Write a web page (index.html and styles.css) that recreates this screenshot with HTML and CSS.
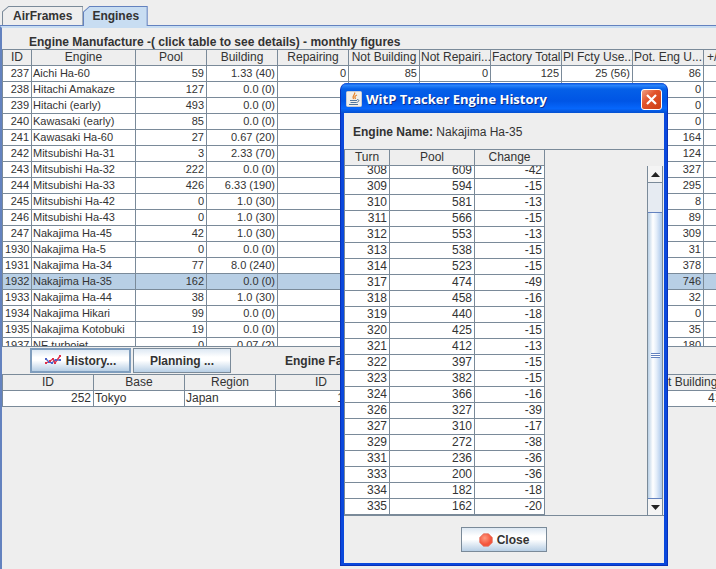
FILE: index.html
```
<!DOCTYPE html>
<html lang="en">

<head>
    <meta charset="utf-8">
    <title>WitP Tracker</title>
    <link rel="stylesheet" href="styles.css">
</head>

<body>
    <nav class="tabs">
        <button type="button" class="tab"><svg class="tab-shape" viewBox="0 0 80 20" preserveAspectRatio="none"><path d="M.5 20V6L6.500.5H79.500V20" /></svg><span>AirFrames</span></button>
        <button type="button" class="tab active"><svg class="tab-shape" viewBox="0 0 64 20" preserveAspectRatio="none"><path d="M.5 20V6L6.500.5H63.500V20" /></svg><span>Engines</span></button>
    </nav>

    <main class="panel">
        <h1 class="caption">Engine Manufacture -( click table to see details) - monthly figures</h1>
        <div class="engines-view">
            <table class="grid engines">
                <colgroup>
                    <col class="col-id">
                    <col class="col-engine">
                    <col span="9" class="col-figure">
                </colgroup>
                <thead>
                    <tr>
                        <th>ID</th>
                        <th>Engine</th>
                        <th>Pool</th>
                        <th>Building</th>
                        <th>Repairing</th>
                        <th>Not Building</th>
                        <th>Not Repairi...</th>
                        <th>Factory Total</th>
                        <th>Pl Fcty Use...</th>
                        <th>Pot. Eng U...</th>
                        <th class="last">+/- Engines</th>
                    </tr>
                </thead>
                <tbody id="engineRows"></tbody>
            </table>
        </div>

        <div class="toolbar">
            <button type="button" class="btn btn-history">
                <svg width="17" height="14" viewBox="0 0 17 14" fill="none">
                    <path d="M1 5L4 8L7 9L10 6L15 6" stroke="#4a63c8" stroke-width="1.300" />
                    <path d="M1 9L5 7L8 5L10 9L15 2" stroke="#e0304a" stroke-width="1.300" />
                    <path d="M0 4h2v2H0zM3 7h2v2H3zM6 8h2v2H6zM10 5h2v2h-2zM14 5h2v2h-2z" fill="#4a63c8" />
                    <path d="M0 8h2v2H0zM4 6h2v2H4zM7 4h2v2H7zM9 8h2v2H9zM14 1h2v2h-2z" fill="#e0304a" />
                </svg>
                History...
            </button>
            <button type="button" class="btn btn-planning">Planning ...</button>
            <h2 class="toolbar-title">Engine Factories</h2>
        </div>

        <div class="factories-view">
            <table class="grid factories">
                <thead>
                    <tr>
                        <th>ID</th>
                        <th>Base</th>
                        <th>Region</th>
                        <th>ID</th>
                        <th>Engine</th>
                        <th>Building</th>
                        <th>Repairing</th>
                        <th>Not Building</th>
                    </tr>
                </thead>
                <tbody>
                    <tr>
                        <td>252</td>
                        <td class="left">Tokyo</td>
                        <td class="left">Japan</td>
                        <td>1932</td>
                        <td></td>
                        <td></td>
                        <td></td>
                        <td>418</td>
                    </tr>
                </tbody>
            </table>
        </div>
    </main>

    <section class="dialog" role="dialog" aria-labelledby="dialogTitle">
        <header class="titlebar">
            <svg width="16" height="16" viewBox="0 0 16 16" fill="none">
                <rect x=".5" y=".5" width="15" height="15" rx="1" fill="#f2f0ea" stroke="#c9cbd2" />
                <path d="M8.500 1.500C10 3.500 5.500 4.500 7.500 8M11 4C8.500 5 8.500 6 9.500 8" stroke="#e8862e" stroke-width="1.300" />
                <path d="M4 9.500h7M4.500 11.500h6M11 8.500c3 0 2 2.500-.5 3M3 13.500h9" stroke="#53779c" />
            </svg>
            <h2 id="dialogTitle">WitP Tracker Engine History</h2>
            <button type="button" class="window-close" aria-label="Close window">
                <svg width="13" height="13" viewBox="0 0 13 13"><path d="M2 2L11 11M11 2L2 11" stroke="#fff" stroke-width="2.200" /></svg>
            </button>
        </header>
        <div class="dialog-body">
            <p class="engine-name"><b>Engine Name:</b> Nakajima Ha-35</p>
            <div class="history-pane">
                <div class="history-main">
                    <table class="grid history">
                        <colgroup>
                            <col class="col-turn">
                            <col class="col-pool">
                            <col class="col-change">
                        </colgroup>
                        <thead>
                            <tr>
                                <th>Turn</th>
                                <th>Pool</th>
                                <th>Change</th>
                            </tr>
                        </thead>
                    </table>
                    <div class="history-view">
                        <table class="grid history">
                            <colgroup>
                                <col class="col-turn">
                                <col class="col-pool">
                                <col class="col-change">
                            </colgroup>
                            <tbody id="historyRows"></tbody>
                        </table>
                    </div>
                </div>
                <div class="scrollbar">
                    <button type="button" class="arrow" aria-label="Scroll up"><svg width="9" height="5" viewBox="0 0 9 5"><path d="M0 5L4.500 0L9 5z" fill="#222" /></svg></button>
                    <div class="track"></div>
                    <div class="thumb"><span class="grip"></span></div>
                    <button type="button" class="arrow" aria-label="Scroll down"><svg width="9" height="5" viewBox="0 0 9 5"><path d="M0 0L4.500 5L9 0z" fill="#222" /></svg></button>
                </div>
            </div>
            <footer class="dialog-footer">
                <button type="button" class="btn btn-close">
                    <svg width="14" height="14" viewBox="0 0 14 14">
                        <defs>
                            <radialGradient id="stop" cx=".4" cy=".35">
                                <stop offset="0" stop-color="#ff9a80" />
                                <stop offset="1" stop-color="#f4553c" />
                            </radialGradient>
                        </defs>
                        <path d="M4.500.7h5L13.300 4.500v5L9.500 13.300h-5L.7 9.500v-5z" fill="url(#stop)" stroke="#e0705f" stroke-width=".7" />
                    </svg>
                    Close
                </button>
            </footer>
        </div>
    </section>

    <script>
        // id, engine, pool, building, potential engines used
        const engines = [
            [237, 'Aichi Ha-60', 59, '1.33 (40)', 86],
            [238, 'Hitachi Amakaze', 127, '0.0 (0)', 0],
            [239, 'Hitachi (early)', 493, '0.0 (0)', 0],
            [240, 'Kawasaki (early)', 85, '0.0 (0)', 0],
            [241, 'Kawasaki Ha-60', 27, '0.67 (20)', 164],
            [242, 'Mitsubishi Ha-31', 3, '2.33 (70)', 124],
            [243, 'Mitsubishi Ha-32', 222, '0.0 (0)', 327],
            [244, 'Mitsubishi Ha-33', 426, '6.33 (190)', 295],
            [245, 'Mitsubishi Ha-42', 0, '1.0 (30)', 8],
            [246, 'Mitsubishi Ha-43', 0, '1.0 (30)', 89],
            [247, 'Nakajima Ha-45', 42, '1.0 (30)', 309],
            [1930, 'Nakajima Ha-5', 0, '0.0 (0)', 31],
            [1931, 'Nakajima Ha-34', 77, '8.0 (240)', 378],
            [1932, 'Nakajima Ha-35', 162, '0.0 (0)', 746],
            [1933, 'Nakajima Ha-44', 38, '1.0 (30)', 32],
            [1934, 'Nakajima Hikari', 99, '0.0 (0)', 0],
            [1935, 'Nakajima Kotobuki', 19, '0.0 (0)', 35],
            [1937, 'NE turbojet', 0, '0.07 (2)', 180]
        ];

        // repairing, not building, not repairing, factory total, planned use
        const factoryFigures = { 237: [0, 85, 0, 125, '25 (56)'] };

        // turn, pool, change
        const history = [
            [308, 609, -42], [309, 594, -15], [310, 581, -13], [311, 566, -15],
            [312, 553, -13], [313, 538, -15], [314, 523, -15], [317, 474, -49],
            [318, 458, -16], [319, 440, -18], [320, 425, -15], [321, 412, -13],
            [322, 397, -15], [323, 382, -15], [324, 366, -16], [326, 327, -39],
            [327, 310, -17], [329, 272, -38], [331, 236, -36], [333, 200, -36],
            [334, 182, -18], [335, 162, -20]
        ];

        const engineRows = document.getElementById('engineRows');
        engines.forEach(([id, name, pool, building, used]) => {
            const row = engineRows.insertRow();
            const figures = factoryFigures[id] || ['', '', '', '', ''];
            if (id === 1932) row.className = 'selected';
            row.innerHTML = `
                <td>${id}</td>
                <td class="left">${name}</td>
                <td>${pool}</td>
                <td>${building}</td>
                ${figures.map(figure => `<td>${figure}</td>`).join('')}
                <td>${used}</td>
                <td></td>
            `;
        });

        const historyRows = document.getElementById('historyRows');
        history.forEach(([turn, pool, change]) => {
            const row = historyRows.insertRow();
            row.innerHTML = `<td>${turn}</td><td>${pool}</td><td>${change}</td>`;
        });
    </script>
</body>

</html>
```
FILE: styles.css
```
* {
    box-sizing: border-box;
}

body {
    margin: 0;
    min-height: 100vh;
    display: flex;
    flex-direction: column;
    overflow: hidden;
    background-color: #eee;
    color: #333;
    font-family: "Liberation Sans", Arial, sans-serif;
    font-size: 12px;
}

h1,
h2,
p {
    margin: 0;
    font-size: 12px;
}

button {
    padding: 0;
    color: #333;
    font: bold 12px "Liberation Sans", Arial, sans-serif;
}

/* Tabs */
.tabs {
    display: flex;
    padding: 6px 2px 0;
    border-bottom: 1px solid #6382bf;
}

.tab {
    position: relative;
    height: 19px;
    padding: 0 11px;
    border: none;
    background: none;
}

.tab span {
    position: relative;
}

.tab-shape {
    position: absolute;
    left: 0;
    top: 0;
    width: 100%;
    height: 100%;
    fill: #eee;
    stroke: #7a8a99;
}

.active {
    height: 20px;
    margin-bottom: -1px;
    padding: 0 9px;
}

.active .tab-shape {
    fill: #c8ddf2;
    stroke: #6382bf;
}

/* Main panel */
.panel {
    flex: 1;
    border-top: 2px solid #c8ddf2;
    border-left: 2px solid #6382bf;
}

.caption {
    padding: 6px 27px 0;
    height: 21px;
    line-height: 16px;
    white-space: nowrap;
}

.grid {
    table-layout: fixed;
    border-collapse: separate;
    border-spacing: 0;
    border-left: 1px solid #7a8a99;
}

.grid th,
.grid td {
    height: 16px;
    padding: 0 2px;
    overflow: hidden;
    border-right: 1px solid #7a8a99;
    border-bottom: 1px solid #7a8a99;
    line-height: 15px;
    text-align: right;
    white-space: nowrap;
}

.grid th {
    height: 17px;
    padding: 0 1px;
    border-top: 1px solid #7a8a99;
    background-color: #eee;
    font-weight: normal;
    text-align: center;
}

.grid td {
    background-color: #fff;
}

.grid .left {
    padding: 0 1px;
    text-align: left;
}

.grid .last {
    padding: 0 3px;
    text-align: left;
}

.grid .selected td {
    background-color: #b8cfe5;
}

.engines-view {
    height: 298px;
    overflow: hidden;
    border-bottom: 1px solid #7a8a99;
}

.engines {
    width: 773px;
}

.engines td {
    font-size: 11px;
}

.col-id {
    width: 29px;
}

.col-engine {
    width: 104px;
}

.col-figure {
    width: 71px;
}

.toolbar {
    display: flex;
    align-items: center;
    gap: 2px;
    padding: 1px 0 1px 28px;
}

.toolbar-title {
    padding-left: 52px;
}

.btn {
    display: flex;
    align-items: center;
    justify-content: center;
    gap: 4px;
    height: 25px;
    border: 1px solid #7a8a99;
    background: linear-gradient(#dde8f3, #fff 35%, #fff 50%, #b8cfe5);
}

.btn-history {
    width: 101px;
    border: 2px solid #7f9dbd;
}

.btn-planning {
    width: 98px;
}

.factories-view {
    overflow: hidden;
}

.factories {
    width: 729px;
}

/* History window */
.dialog {
    position: absolute;
    left: 340px;
    top: 83px;
    width: 328px;
    padding: 0 3px 2px;
    border: 1px solid #0831b9;
    border-width: 0 1px 1px;
    border-radius: 7px 7px 0 0;
    background-color: #0a48dc;
}

.titlebar {
    display: flex;
    align-items: center;
    gap: 4px;
    height: 30px;
    margin: 0 -3px;
    padding: 2px 5px 0;
    border-radius: 7px 7px 0 0;
    background: linear-gradient(#0b50d8, #2a84fa 8%, #0560e8 20%, #0055e5 60%, #0666fb 85%, #0450d0);
    color: #fff;
}

.titlebar h2 {
    flex: 1;
    font: 700 13px "Open Sans", sans-serif;
    text-shadow: 1px 1px #0b2f8a;
}

.window-close {
    display: flex;
    align-items: center;
    justify-content: center;
    width: 21px;
    height: 21px;
    border: 1px solid #fff;
    border-radius: 3px;
    background: linear-gradient(135deg, #f0a083, #e2542c 40%, #cc3d12);
}

.dialog-body {
    background-color: #eee;
}

.engine-name {
    padding: 10px 9px;
    height: 36px;
    line-height: 18px;
}

.history-pane {
    display: flex;
    justify-content: space-between;
    border-top: 1px solid #7a8a99;
    border-bottom: 1px solid #7a8a99;
}

.history {
    width: 201px;
}

.history th {
    height: 16px;
    border-top: none;
}

.history-view {
    height: 349px;
    overflow: hidden;
}

/* list is scrolled part of a row down */
.history-view .history {
    margin-top: -3px;
}

.col-turn {
    width: 45px;
}

.col-pool {
    width: 85px;
}

.col-change {
    width: 70px;
}

.scrollbar {
    display: flex;
    flex-direction: column;
    width: 16px;
    margin: 16px 1px 0 0;
    border-left: 1px solid #7a8a99;
    border-right: 1px solid #7a8a99;
}

.arrow {
    display: flex;
    align-items: center;
    justify-content: center;
    height: 16px;
    border: none;
    background-color: #f4f4f4;
}

.track {
    height: 30px;
    border-top: 1px solid #7a8a99;
    background-color: #e6ebf2;
}

.thumb {
    flex: 1;
    display: flex;
    align-items: center;
    justify-content: center;
    border-top: 1px solid #6382bf;
    border-bottom: 1px solid #6382bf;
    background: linear-gradient(to right, #b8cfe5, #fff 35%, #e4eefa 60%, #a9c6ea);
}

.grip {
    width: 9px;
    height: 5px;
    background: repeating-linear-gradient(#6382bf 0 1px, #fff 1px 2px);
}

.dialog-footer {
    display: flex;
    justify-content: center;
    padding: 11px 0;
}

.btn-close {
    width: 86px;
}
```
